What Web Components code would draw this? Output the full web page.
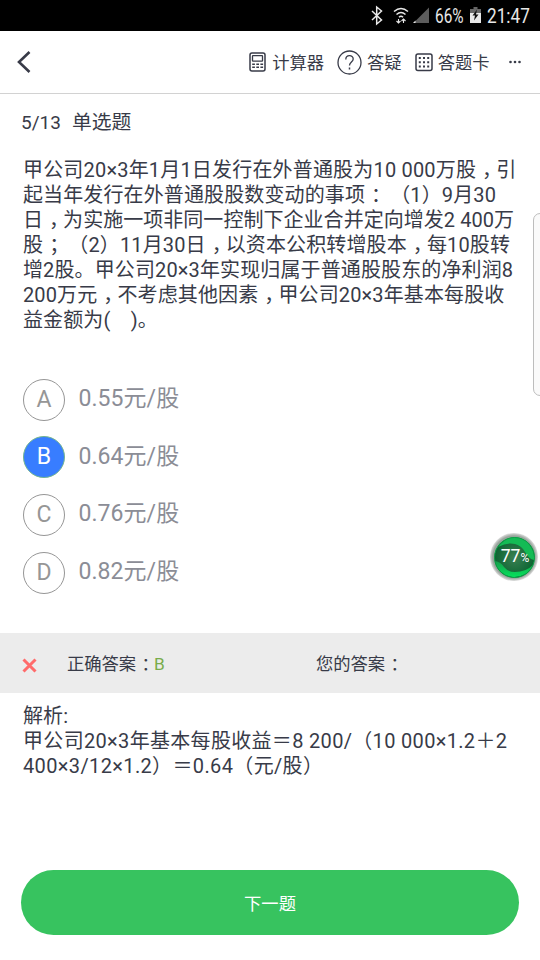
<!DOCTYPE html>
<html lang="zh-CN"><head><meta charset="utf-8"><title>单选题</title>
<style>html,body{margin:0;background:#fff}body{width:540px;height:960px;overflow:hidden;font-family:Roboto,"Noto Sans CJK SC",sans-serif;color:#383b48}</style></head>
<body><quiz-screen></quiz-screen>
<script>
function define(name, html) {
  const t = document.createElement('template');
  t.innerHTML = html;
  customElements.define(name, class extends HTMLElement {
    constructor() {
      super();
      this.attachShadow({mode: 'open'}).append(t.content.cloneNode(true));
    }
  });
}
define('status-bar', `<style>
:host{display:flex;height:30.5px;background:#000;color:#e8e8e8;align-items:center;justify-content:flex-end;padding-right:10px;box-sizing:border-box;font-size:20px}
svg{display:block;flex:none}span{display:block;line-height:24px;padding-top:2px;white-space:nowrap}
.p{width:31px;margin-left:6px}.p b,.t b{display:block;width:max-content;font-weight:400;transform:scaleX(.77);transform-origin:0 50%}.t{width:43px;margin-left:6px}.t b{transform:scaleX(.86)}
.bat{margin-left:4px}
</style>
<svg width="62" height="30" viewBox="0 0 62 30" fill="none" stroke="#e8e8e8" stroke-width="1.500"><path d="M5 11l9.500 9-4.800 4V7l4.800 4L5 20"/>
<path d="M27 11.500q7-6 14 0M29.500 14.500q4.500-4 9 0M32 17.300q2-2 4 0"/><path d="M31.500 19v4m-2-2 2 2 2-2M36.500 23v-4m-2 2 2-2 2 2" stroke-width="1.100"/>
<path d="M62 7.500V23H46.500z" fill="#5c5c5c" stroke="none"/><path d="M48.500 20.500V23H46z" fill="#e8e8e8" stroke="none"/></svg>
<span class="p"><b>66%</b></span>
<svg class="bat" width="11" height="18" viewBox="0 0 11 18"><path d="M3.500 1h4v2H11v5H0V3h3.500z" fill="#666"/><path d="M0 7h11v10H0z" fill="#e8e8e8"/><path d="M7 3.500 2.500 9.500h2.500L4 14.500l4.500-6H6z" fill="#111"/></svg>
<span class="t"><b>21:47</b></span>`);
define('tool-item', `<style>:host{display:flex;align-items:center;font-size:17.3px;line-height:24px;white-space:nowrap}span{padding-top:2px}</style><slot name="icon"></slot><span><slot></slot></span>`);
define('nav-bar', `<style>
:host{display:flex;height:63.5px;box-sizing:border-box;border-bottom:1px solid #d2d2d2;align-items:center;padding-left:16px}
svg{display:block}.sp{flex:1}.a svg{margin:1px 6px 0 0}.b{margin-left:13px}.b svg{margin:1px 5px 0 0}.c{margin-left:13px}.c svg{margin:1px 5px 0 0}.m{margin:0 18px 0 18.500px}.back{margin-top:1px}
</style>
<svg class="back" width="16" height="24" viewBox="0 0 16 24" fill="none" stroke="#383b48" stroke-width="2.600"><path d="M13.500 2 3 12l10.500 10"/></svg><div class="sp"></div>
<tool-item class="a"><svg slot="icon" width="17" height="20" viewBox="0 0 17 20" fill="none" stroke="#383b48"><rect x="1" y="1" width="15" height="18" rx="2" stroke-width="1.500"/><rect x="3.500" y="3.700" width="10" height="5.500" rx=".5" stroke-width="1.300"/><path d="M3.200 12.300h11M3.200 15.300h11" stroke-width="1.400" stroke-dasharray="2.700 1.400"/></svg>计算器</tool-item>
<tool-item class="b"><svg slot="icon" width="25" height="25" viewBox="0 0 25 25" fill="none" stroke="#383b48" stroke-width="1.300"><circle cx="12.500" cy="12.500" r="11.500"/><path d="M8.800 9.500c0-5 7.400-5 7.400-.6 0 3-3.700 3.200-3.700 6.600"/><path d="M12.500 17.500v2" stroke-width="1.500"/></svg>答疑</tool-item>
<tool-item class="c"><svg slot="icon" width="18" height="19" viewBox="0 0 18 19" fill="none" stroke="#383b48"><rect x="1" y="1" width="16" height="16.500" rx="2" stroke-width="1.500"/><path d="M3.800 5h11M3.800 9.200h11M3.800 13.400h11" stroke-width="2" stroke-dasharray="2 2.200"/></svg>答题卡</tool-item>
<svg class="m" width="14" height="4" viewBox="0 0 14 4" fill="#383b48"><circle cx="2.500" cy="2" r="1.300"/><circle cx="7" cy="2" r="1.300"/><circle cx="11.500" cy="2" r="1.300"/></svg>`);
/* One line of running text; <i> marks full-width punctuation centred in its cell. */
define('text-line', `<style>:host{display:block;height:25px;line-height:25px;font-size:20px;white-space:pre;letter-spacing:var(--ls,.12px)}::slotted(i){font-style:normal;font-feature-settings:"halt";padding:0 4px 0 6px}</style><slot></slot>`);
define('option-row', `<style>
:host{display:flex;align-items:center;height:42px;gap:13.500px;font-size:23px;color:#8b8d96;line-height:26px}
.k{width:42px;height:42px;box-sizing:border-box;border:1.300px solid #969696;border-radius:50%;display:flex;align-items:center;justify-content:center;color:#969696;font-size:23px}
:host([selected]) .k{background:#387dff;border-color:#73b58e;color:#fff}.v{white-space:nowrap;padding-bottom:1px;letter-spacing:.05px}
</style><div class="k"><slot name="key"></slot></div><div class="v"><slot></slot></div>`);
define('answer-bar', `<style>
:host{display:flex;box-sizing:border-box;height:60px;background:#ececec;align-items:center;padding-left:22px;font-size:17.300px;line-height:24px;white-space:nowrap}
svg{display:block;margin-top:4px}div{padding-top:2px}.r{margin-left:30px;width:249px}b{font-weight:400;color:#78ac4b}i{font-style:normal;font-feature-settings:"halt";padding:0 4px 0 5.300px}
</style><svg width="15" height="15" viewBox="0 0 15 15" stroke="#ff6b6b" stroke-width="3"><path d="m1.500 1.500 12 12m0-12-12 12"/></svg>
<div class="r">正确答案<i>：</i><b>B</b></div><div>您的答案<i>：</i></div>`);
define('next-button', `<style>:host{display:flex;margin:0 21px;width:498px;height:65px;border-radius:33px;background:#37c35f;color:#fff;align-items:center;justify-content:center;font-size:17.300px;line-height:24px}span{padding-top:2px}</style><span><slot></slot></span>`);
define('progress-ball', `<style>
:host{display:flex;box-sizing:border-box;width:48px;height:48px;border-radius:50%;background:radial-gradient(circle closest-side,#98a59c 88%,#bcc0bd 94%,#e0e0e0);align-items:center;justify-content:center;color:#fff;font-size:17.500px}
.o{display:grid;width:41px;height:41px}.o>*{grid-area:1/1}.n{display:flex;align-items:baseline;align-self:center;justify-self:center;line-height:20px;padding-left:2px}small{font-size:12px}
</style><div class="o"><svg width="41" height="41" viewBox="0 0 41 41"><defs><radialGradient id="g"><stop offset="0" stop-color="#3b8053"/><stop offset="1" stop-color="#0b6431"/></radialGradient><linearGradient id="h" x1="0" y1="0" x2="0" y2="1"><stop offset="0" stop-color="#159d4b"/><stop offset="1" stop-color="#06e25c"/></linearGradient></defs><circle cx="20.500" cy="20.500" r="20" fill="url(#g)"/><path d="M1 24Q7 25 10 30q4 5 11 5 11 0 18-7A20 20 0 0 1 1 24z" fill="url(#h)"/><path d="M4 10Q18-7 33 5q8 8 7 18-5-1-9-8-3-6-10-8-8-2-17 3z" fill="#14bb55"/><circle cx="20.500" cy="20.500" r="20" fill="none" stroke="#0b9f46"/></svg><div class="n">77<small>%</small></div></div>`);
define('edge-panel', `<style>:host{display:block;box-sizing:border-box;width:14px;height:183px;border:1px solid #bdbdbd;border-radius:8px;background:#fafafa}</style>`);
define('quiz-screen', `<style>
:host{display:flex;flex-direction:column;position:relative;width:540px;height:960px;overflow:hidden;background:#fff}
.title{display:flex;gap:11px;align-items:baseline;padding:15.500px 0 0 21px;height:48px;font-size:19.800px;line-height:26px;box-sizing:border-box}.title span{font-size:19px}
.q{padding:15.500px 0 0 23px}.opts{display:grid;gap:15.700px;padding:46px 0 0 23px}
answer-bar{margin-top:39.500px}.ex{padding:10.500px 0 0 23px;height:177px;box-sizing:border-box}
progress-ball{position:absolute;left:490px;top:533px}edge-panel{position:absolute;left:533px;top:213px}
</style>
<status-bar></status-bar><nav-bar></nav-bar>
<div class="title"><span>5/13</span><div>单选题</div></div>
<div class="q">
<text-line style="--ls:.18px">甲公司20×3年1月1日发行在外普通股为10 000万股<i>，</i>引</text-line>
<text-line>起当年发行在外普通股股数变动的事项<i>：</i> （1）9月30</text-line>
<text-line style="--ls:.04px">日<i>，</i>为实施一项非同一控制下企业合并定向增发2 400万</text-line>
<text-line>股<i>；</i> （2）11月30日<i>，</i>以资本公积转增股本<i>，</i>每10股转</text-line>
<text-line>增2股。甲公司20×3年实现归属于普通股股东的净利润8</text-line>
<text-line>200万元<i>，</i>不考虑其他因素<i>，</i>甲公司20×3年基本每股收</text-line>
<text-line>益金额为(    )。</text-line></div>
<div class="opts">
<option-row><span slot="key">A</span>0.55元/股</option-row>
<option-row selected><span slot="key">B</span>0.64元/股</option-row>
<option-row><span slot="key">C</span>0.76元/股</option-row>
<option-row><span slot="key">D</span>0.82元/股</option-row></div>
<answer-bar></answer-bar>
<div class="ex"><text-line>解析:</text-line><text-line style="--ls:.32px">甲公司20×3年基本每股收益＝8 200/（10 000×1.2＋2</text-line><text-line style="--ls:.36px">400×3/12×1.2）＝0.64（元/股）</text-line></div>
<next-button>下一题</next-button>
<edge-panel></edge-panel><progress-ball></progress-ball>`);
</script></body></html>
